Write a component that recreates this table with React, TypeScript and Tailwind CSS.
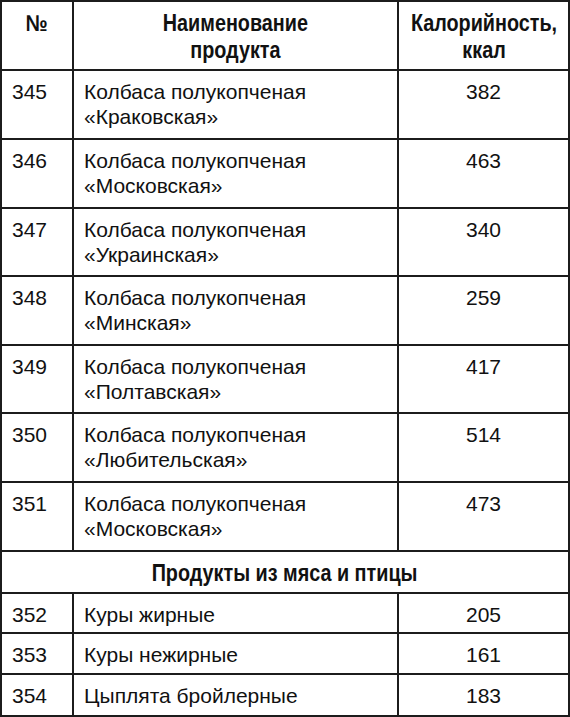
const rows = [
  { n: "345", name: "Колбаса полукопченая", sub: "«Краковская»", kcal: "382", h: "h-[69px]" },
  { n: "346", name: "Колбаса полукопченая", sub: "«Московская»", kcal: "463", h: "h-[69px]" },
  { n: "347", name: "Колбаса полукопченая", sub: "«Украинская»", kcal: "340", h: "h-[68px]" },
  { n: "348", name: "Колбаса полукопченая", sub: "«Минская»", kcal: "259", h: "h-[69px]" },
  { n: "349", name: "Колбаса полукопченая", sub: "«Полтавская»", kcal: "417", h: "h-[68px]" },
  { n: "350", name: "Колбаса полукопченая", sub: "«Любительская»", kcal: "514", h: "h-[69px]" },
  { n: "351", name: "Колбаса полукопченая", sub: "«Московская»", kcal: "473", h: "h-[69px]" },
];

const meat = [
  { n: "352", name: "Куры жирные", kcal: "205", h: "h-[40px]" },
  { n: "353", name: "Куры нежирные", kcal: "161", h: "h-[41px]" },
  { n: "354", name: "Цыплята бройлерные", kcal: "183", h: "h-[40px]" },
];

function Row({ n, name, sub, kcal, h, last }: { n: string; name: string; sub?: string; kcal: string; h: string; last?: boolean }) {
  return (
    <div className={`flex ${h} ${last ? "" : "border-b-2 border-[#1c1c1c]"}`}>
      <div className="w-[72px] shrink-0 border-r-2 border-[#1c1c1c] pl-[10px] pt-2">{n}</div>
      <div className="w-[325px] shrink-0 border-r-2 border-[#1c1c1c] pl-[10px] pt-2">
        {name}
        {sub && <br />}
        {sub}
      </div>
      <div className="flex-1 text-center pt-2">{kcal}</div>
    </div>
  );
}

export default function App() {
  return (
    <div className="w-[570px] h-[717px] bg-white">
      <div
        className="w-[570px] border-2 border-[#1c1c1c] text-[#111] text-[21px] leading-[25px]"
        style={{ fontFamily: '"Liberation Sans", Arial, sans-serif' }}
      >
        {/* header */}
        <div className="flex h-[69px] border-b-2 border-[#1c1c1c] font-bold text-[23px] leading-[27px]">
          <div className="w-[72px] shrink-0 border-r-2 border-[#1c1c1c] text-center pt-2">
            <span className="inline-block scale-x-[0.86]">№</span>
          </div>
          <div className="w-[325px] shrink-0 border-r-2 border-[#1c1c1c] text-center pt-2">
            <span className="inline-block scale-x-[0.86]">
              Наименование
              <br />
              продукта
            </span>
          </div>
          <div className="flex-1 text-center pt-2">
            <span className="inline-block scale-x-[0.86]">
              Калорийность,
              <br />
              ккал
            </span>
          </div>
        </div>

        {rows.map((r) => (
          <Row key={r.n} {...r} />
        ))}

        {/* section */}
        <div className="h-[42px] border-b-2 border-[#1c1c1c] text-center font-bold text-[23px] leading-[27px] pt-2">
          <span className="inline-block scale-x-[0.86]">Продукты из мяса и птицы</span>
        </div>

        {meat.map((r, i) => (
          <Row key={r.n} {...r} last={i === meat.length - 1} />
        ))}
      </div>
    </div>
  );
}
